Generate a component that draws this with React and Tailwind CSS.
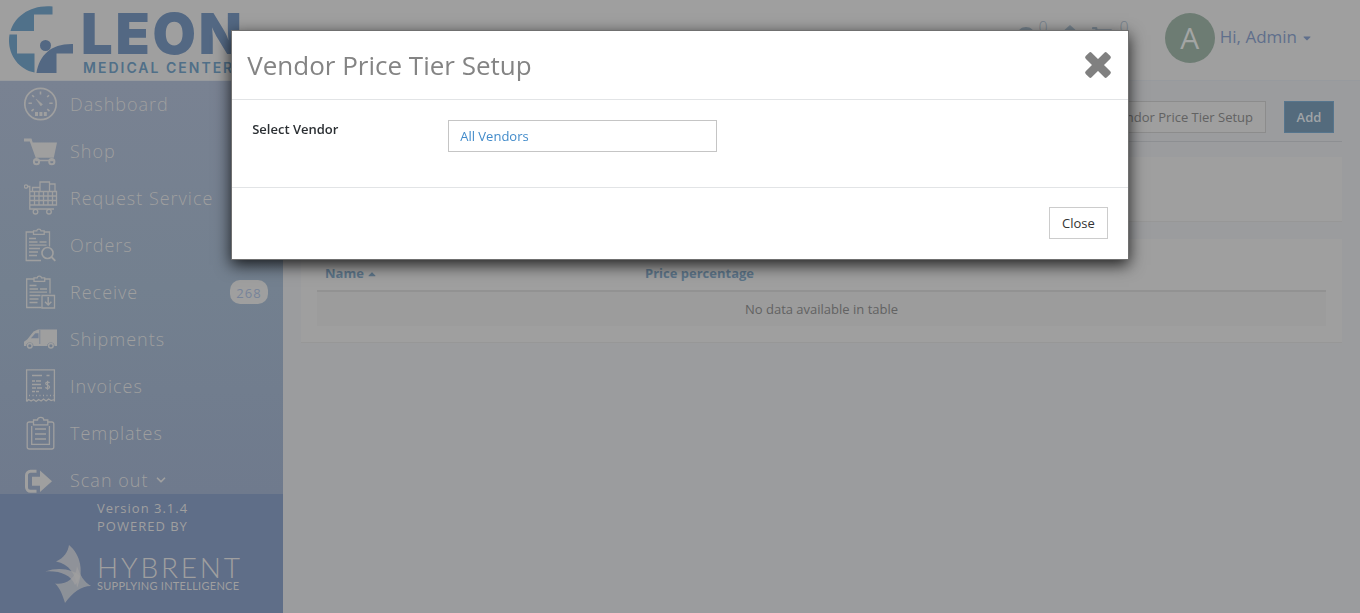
import React from "react";
import { FaShoppingCart, FaComment, FaCaretDown, FaCaretUp } from "react-icons/fa";
import { LuChevronDown } from "react-icons/lu";

function IconBase({ children }) {
  return (
    <svg
      viewBox="0 0 34 34"
      className="h-[34px] w-[34px] shrink-0"
      fill="none"
      stroke="currentColor"
      strokeWidth="1.3"
      aria-hidden="true"
    >
      {children}
    </svg>
  );
}

function DashboardIcon() {
  return (
    <IconBase>
      <circle cx="16.5" cy="17" r="15.7" strokeWidth="1.7" />
      <path d="M16.500 4.500v3M8.200 8.200l1.800 1.800M25 8.200L23.200 10M4.500 16.200h3.400M25.300 16.200h3.400M7.500 24.200l2.200-2M25.500 24.200l-2.200-2" strokeWidth="1.6" />
      <path d="M12 12l6.500 5.200-1.600 1.800z" fill="currentColor" strokeWidth="0.5" />
      <path d="M11 25h3v4h-3zM15.400 25h3v4h-3zM19.800 25h3v4h-3z" fill="currentColor" stroke="none" />
    </IconBase>
  );
}

function ShopIcon() {
  return (
    <IconBase>
      <path d="M0 4.500h7.500l1.200 4H33l-3.200 15.200H11.700L5.800 7.600H0z" fill="currentColor" stroke="none" />
      <path d="M12.500 23.500l-.5 3h18" strokeWidth="1.5" />
      <circle cx="12.500" cy="27.700" r="2.600" strokeWidth="2" />
      <circle cx="27.800" cy="27.700" r="2.600" strokeWidth="2" />
    </IconBase>
  );
}

function RequestIcon() {
  return (
    <IconBase>
      <circle cx="2" cy="5.500" r="1.700" />
      <path d="M4 5.500h1.800V28H30M5.800 10.500H32.500V24H5.800M5.800 15H32.500M5.800 19.500H32.500M10.500 10.500V24M15 10.500V24M19.500 10.500V24M24 10.500V24M28.500 10.500V24" />
      <path d="M8.500 10.500v-4H16v4M16 8.500V1h9.500v9.500M25.500 3h5.500v7.500" />
      <circle cx="11.500" cy="30.700" r="2.300" />
      <circle cx="25" cy="30.700" r="2.300" />
    </IconBase>
  );
}

function SheetLines() {
  return (
    <>
      <path d="M9.500 4H2.200v28.500H17M20 4h5.500v14.500" />
      <path d="M9.500 2.800h3.300C13 .5 16.700.5 17 2.800h3.200v3.500H9.500z" />
      <path d="M5 10.500h7M5 14h8.500M5 17.200h17.500M15.500 14h7M5 20.500h11M5 24h9M5 27.500h8" />
    </>
  );
}

function OrdersIcon() {
  return (
    <IconBase>
      <SheetLines />
      <circle cx="23.500" cy="25" r="5.500" strokeWidth="1.600" />
      <path d="M27.500 29l3.800 3.800" strokeWidth="1.800" />
    </IconBase>
  );
}

function ReceiveIcon() {
  return (
    <IconBase>
      <g transform="translate(.5 0)">
        <SheetLines />
      </g>
      <path d="M18 20.500h12.500V33H18z" />
      <path d="M24.200 22v8M21 26.800l3.200 3.200 3.200-3.200" strokeWidth="1.500" />
    </IconBase>
  );
}

function TruckIcon() {
  return (
    <IconBase>
      <path d="M15.300 7.500H33V24h-2.500a3.600 3.600 0 0 0-7.200 0H9.400a3.600 3.600 0 0 0-7.200 0H0v-4.200l3.400-2.500L9.500 9.500 14 7.500z" fill="currentColor" stroke="none" />
      <path d="M7 16.200l4.300-5H14.500v5z" className="fill-[#748093]" stroke="none" />
      <path d="M15.800 8v14" className="stroke-[#748093]" strokeWidth=".8" />
      <circle cx="5.800" cy="23.800" r="2.300" strokeWidth="1.500" />
      <circle cx="26.900" cy="23.800" r="2.300" strokeWidth="1.500" />
    </IconBase>
  );
}

function InvoiceIcon() {
  return (
    <IconBase>
      <path d="M2.600 32.500V.8h27.800v31.700M2.600 32.500l2-2 2.500 1.500 2.500-1.500 2.500 2 2.500-2 2.500 1.500 2.500-2 2.500 2 2.500-2 2.500 1.500 3.300-1" />
      <path d="M8 6.500h10M22.500 6.500h3M8 12h3M12 12h5M8 15.500h9M8 19h4M13 19h5M8 22.500h3M12 22.500h3" strokeWidth="1.400" />
      <path d="M5 26.500h25" strokeDasharray="1 2.500" />
      <path d="M25.500 14c-.5-1.300-3.800-1.300-3.800.6 0 2 3.900 1.200 3.900 3.300 0 2-3.600 1.900-4.100.3M23.600 11.800v9" strokeWidth="1.200" />
    </IconBase>
  );
}

function TemplateIcon() {
  return (
    <IconBase>
      <path d="M9.500 6H5.200a2 2 0 0 0-2 2v23a2 2 0 0 0 2 2h22.600a2 2 0 0 0 2-2V8a2 2 0 0 0-2-2h-4" />
      <path d="M9.500 4h4c0-3.600 6.300-3.600 6.300 0h4v4.800H9.500zM7.700 10v18.300h17.700V10" />
      <path d="M11 13h11M11 18h11M11 23h11" strokeWidth="1.500" />
    </IconBase>
  );
}

function ScanOutIcon() {
  return (
    <IconBase>
      <path d="M12.500 8.300H6.500a4 4 0 0 0-4 4v12a4 4 0 0 0 4 4h6" strokeWidth="3" />
      <path d="M8 13.700h8V7.500L28 18.300 16 29v-6.300H8z" fill="currentColor" stroke="none" />
    </IconBase>
  );
}

const navItems = [
  { label: "Dashboard", Icon: DashboardIcon },
  { label: "Shop", Icon: ShopIcon },
  { label: "Request Service", Icon: RequestIcon },
  { label: "Orders", Icon: OrdersIcon },
  { label: "Receive", Icon: ReceiveIcon, badge: "268" },
  { label: "Shipments", Icon: TruckIcon },
  { label: "Invoices", Icon: InvoiceIcon },
  { label: "Templates", Icon: TemplateIcon },
  { label: "Scan out", Icon: ScanOutIcon, expandable: true },
];

function LeonLogo() {
  return (
    <a href="#home" className="flex items-start gap-2 pt-1.5 pl-2 font-['Inter',sans-serif] text-[#536883]">
      <svg viewBox="0 0 65 68" className="h-[68px] w-[65px]" aria-hidden="true">
        <path d="M44.500 0.500V8.500H26V25H2.500C7 10 23 -1.500 44.500 0.500z" className="fill-[#50718a]" />
        <path d="M1.500 28.500H9V47.500H26.500V66.500C9 63 -1.500 46 1.500 28.500z" className="fill-[#50718a]" />
        <circle cx="37.500" cy="39.500" r="5.500" fill="currentColor" />
        <path d="M65 38V47.500H48.500V67H28.500C31.500 49 43 37.500 65 38z" fill="currentColor" />
      </svg>
      <span className="flex flex-col">
        <span className="text-[56px] leading-[56px] font-black tracking-wider">LEON</span>
        <span className="pl-0.5 text-sm leading-3 font-semibold tracking-[2px] whitespace-nowrap text-[#506f88]">
          MEDICAL CENTERS
        </span>
      </span>
    </a>
  );
}

function Header() {
  return (
    <header className="flex h-[81px] shrink-0 items-start justify-between border-b border-[#979a9e] bg-[#9f9f9f]">
      <LeonLogo />
      <div className="flex items-start pr-12">
        <div className="flex gap-3 pt-5 pr-9 text-[#74808b]">
          <a href="#messages" aria-label="Messages" className="flex items-start gap-1">
            <FaComment className="mt-1.5 h-4 w-4" />
            <span className="text-base leading-3.5 font-light">0</span>
          </a>
          <a href="#main" aria-label="Home" className="pt-1">
            <svg viewBox="0 0 20 20" className="h-5 w-5" fill="currentColor" aria-hidden="true">
              <path d="M10 1L20 10H17V19H12V13H8V19H3V10H0z" />
            </svg>
          </a>
          <a href="#cart" aria-label="Cart" className="flex items-start gap-2">
            <FaShoppingCart className="mt-1.5 h-5 w-5" />
            <span className="text-base leading-3.5 font-light">0</span>
          </a>
        </div>
        <button type="button" className="flex items-center gap-[5px] pt-[13px] text-[#5f6f8c]">
          <span className="flex h-[50px] w-[50px] items-center justify-center rounded-full bg-[#6d7c73] pb-0.5 text-[30px] text-[#a3a5a4]">
            A
          </span>
          <span className="pb-0.5 text-[17px]">Hi, Admin</span>
          <FaCaretDown className="h-3 w-2.5" />
        </button>
      </div>
    </header>
  );
}

function Sidebar() {
  return (
    <aside className="flex w-[283px] shrink-0 flex-col text-[#9f9f9f]">
      <nav className="min-h-0 flex-1 overflow-hidden bg-linear-to-b from-[#798292] via-[#73808f] to-[#6f7a8d]">
        <ul>
          {navItems.map(({ label, Icon, badge, expandable }) => (
            <li key={label}>
              <a href="#nav" className="flex h-[47px] items-center gap-3 pr-[15px] pb-0.5 pl-6 text-lg font-light tracking-[1px]">
                <Icon />
                <span className="flex items-center gap-1.5 whitespace-nowrap">
                  {label}
                  {expandable && <LuChevronDown className="h-3.5 w-3.5" strokeWidth={3} />}
                </span>
                {badge && (
                  <span className="ml-auto w-[38px] rounded-[10px] bg-[#9f9f9f] pt-0.5 text-center text-[13px] leading-[22px] font-normal text-[#77849a]">
                    {badge}
                  </span>
                )}
              </a>
            </li>
          ))}
        </ul>
      </nav>
      <footer className="h-[119px] shrink-0 bg-[#5f6e88] pt-[5px]">
        <p className="pl-[97px] text-[13px] leading-[18px] tracking-[1px]">
          Version 3.1.4
          <br />
          POWERED BY
        </p>
        <div className="flex items-start gap-1 pt-[9px] pl-[45px]">
          <svg viewBox="0 0 48 60" className="h-[60px] w-12" fill="currentColor" aria-hidden="true">
            <path d="M24 1C36 11 39 28 32 44 31 30 24 20 11 17.500 19 14 23 8 24 1z" opacity=".75" />
            <path d="M0 27.500C15 22 29 26 35 32c-2 5-3 7-5 9C26 31 15 26.500 0 27.500z" opacity=".75" />
            <path d="M32 22C35 31 39 38 46 42 36 42 27 49 20 59 18 52 15 44 10 39.500 19 41 31 36 32 22z" opacity=".7" />
          </svg>
          <div className="pt-2.5 font-['Lato',sans-serif]">
            <p className="text-[28px] leading-[26px] font-light tracking-widest">HYBRENT</p>
            <p className="text-[11px] leading-3 tracking-wide whitespace-nowrap">SUPPLYING INTELLIGENCE</p>
          </div>
        </div>
      </footer>
    </aside>
  );
}

function Content() {
  return (
    <main className="min-w-0 flex-1 bg-[#9b9c9e] px-[18px] pt-5 text-[13px] text-[#626262]">
      <div className="flex justify-end gap-[18px] border-b border-[#8d8f92] pr-2 pb-2">
        <button type="button" className="h-8 border border-[#8c8c8c] bg-[#9f9f9f] px-3 pt-0.5">
          Vendor Price Tier Setup
        </button>
        <button
          type="button"
          className="h-8 w-[50px] border border-[#56758d] bg-[#546b7d] pt-0.5 font-semibold text-[#a0a4a7]"
        >
          Add
        </button>
      </div>
      <section className="mt-[15px] h-[65px] border-b border-[#979797] bg-[#9f9f9f]" />
      <section className="mt-[17px] border-b border-[#979797] bg-[#9f9f9f] p-4">
        <table className="w-full border-collapse">
          <thead>
            <tr className="border-b-2 border-[#929292] text-left text-[#5c7488]">
              <th className="h-9 w-[320px] px-2 pt-0.5 font-bold">
                <span className="flex items-center gap-0.5">
                  Name
                  <FaCaretUp className="h-3 w-3" />
                </span>
              </th>
              <th className="px-2 pt-0.5 font-bold">Price percentage</th>
            </tr>
          </thead>
          <tbody>
            <tr className="h-[35px] bg-[#9c9c9c]">
              <td colSpan={2} className="px-2 pt-0.5 text-center">
                No data available in table
              </td>
            </tr>
          </tbody>
        </table>
      </section>
    </main>
  );
}

function PriceTierDialog() {
  return (
    <div className="fixed inset-0 overflow-auto pt-[30px]">
      <div
        role="dialog"
        aria-modal="true"
        aria-labelledby="dialog-title"
        className="mx-auto w-[66%] border border-[#707070] bg-white bg-clip-padding text-[13px] shadow-[0_5px_15px_rgba(0,0,0,0.8)]"
      >
        <div className="flex h-[69px] items-center justify-between border-b border-[#e2e4e6] px-[15px]">
          <h1 id="dialog-title" className="text-[26px] leading-9 text-[#848484]">
            Vendor Price Tier Setup
          </h1>
          <button type="button" aria-label="Close dialog" className="text-[#808080]">
            <svg viewBox="0 0 30 30" className="h-[30px] w-[30px]" fill="currentColor" aria-hidden="true">
              <rect x="0" y="10.800" width="30" height="8.400" rx="1.800" transform="rotate(45 15 15)" />
              <rect x="0" y="10.800" width="30" height="8.400" rx="1.800" transform="rotate(-45 15 15)" />
            </svg>
          </button>
        </div>
        <div className="flex h-[88px] items-start border-b border-[#e2e4e6] px-5 pt-5">
          <label htmlFor="vendor" className="w-[196px] leading-[18px] font-semibold text-[#2b2f33]">
            Select Vendor
          </label>
          <select
            id="vendor"
            className="h-8 w-[269px] appearance-none border border-[#c5c5c5] bg-white px-[11px] pt-0.5 text-[#428bca]"
          >
            <option>All Vendors</option>
          </select>
        </div>
        <div className="flex h-[71px] items-start justify-end px-5 pt-[19px]">
          <button type="button" className="h-8 border border-[#cccccc] bg-white px-3 pt-0.5 text-[#333333]">
            Close
          </button>
        </div>
      </div>
    </div>
  );
}

export default function App() {
  return (
    <div className="flex h-screen flex-col overflow-hidden font-['Open_Sans',sans-serif]">
      <Header />
      <div className="flex min-h-0 flex-1">
        <Sidebar />
        <Content />
      </div>
      <PriceTierDialog />
    </div>
  );
}
